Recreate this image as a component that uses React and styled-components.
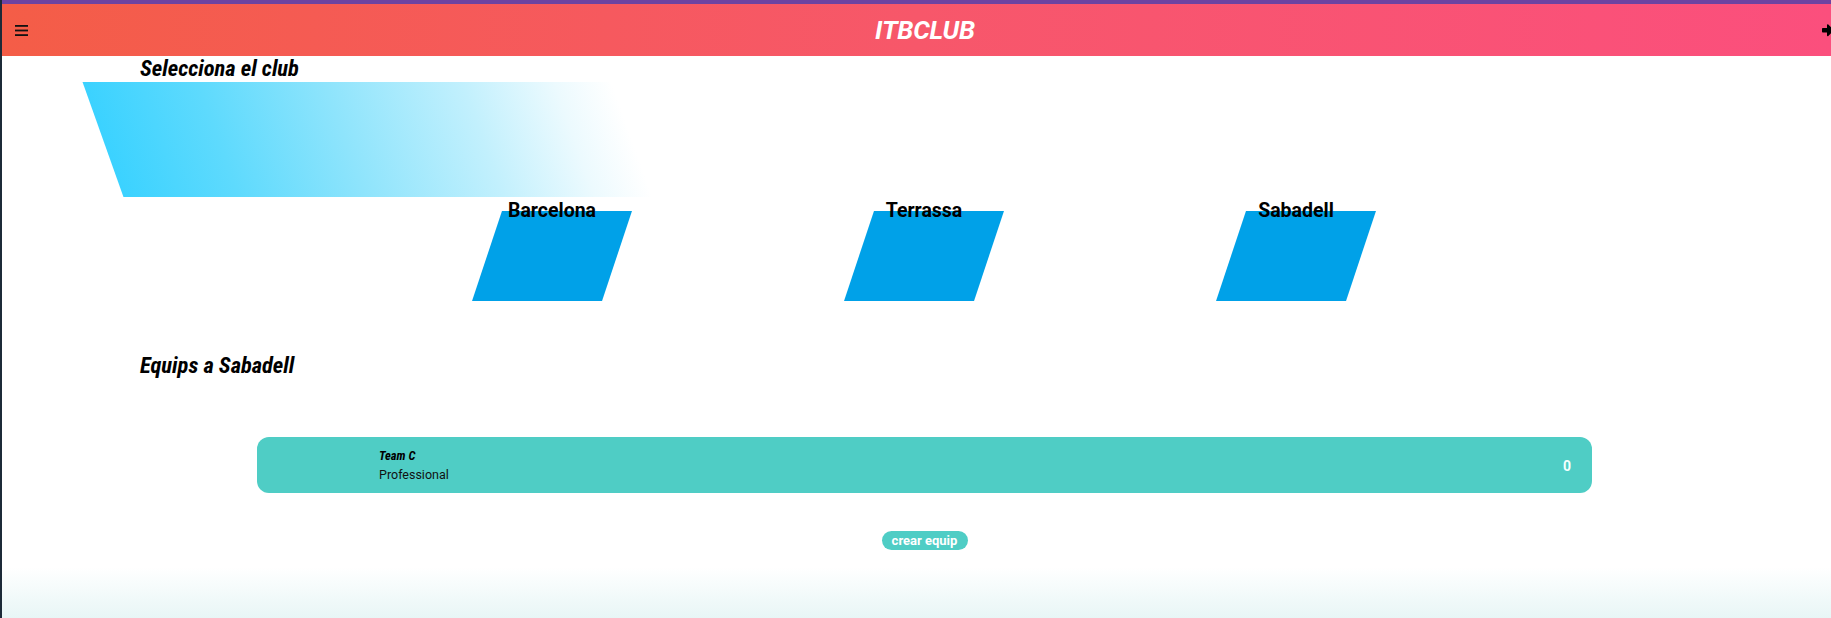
import React from "react";
import styled, { createGlobalStyle } from "styled-components";
import { FaSignInAlt } from "react-icons/fa";

const GlobalStyle = createGlobalStyle`
  html, body { margin: 0; padding: 0; }
  body {
    border-left: 2px solid #1c2a38;
    font-family: Roboto, "Liberation Sans", sans-serif;
    overflow: hidden;
  }
`;

const clubs = ["Barcelona", "Terrassa", "Sabadell"];
const teams = [{ name: "Team C", level: "Professional", points: 0 }];

const Page = styled.div`
  display: flex;
  flex-direction: column;
  min-height: 100vh;
`;

const TopStrip = styled.div`
  height: 4px;
  background: #6d43a1;
`;

const Header = styled.header`
  height: 52px;
  display: flex;
  align-items: center;
  justify-content: space-between;
  padding-left: 13px;
  background: linear-gradient(to right, #f45d47, #f7576a 50%, #fb4f7d);
`;

const Burger = styled.svg`
  width: 13px;
  height: 11px;
  display: block;
`;

const Title = styled.h1`
  margin: 0;
  color: #fff;
  font-family: Roboto, sans-serif;
  font-style: italic;
  font-weight: 700;
  font-size: 26px;
  letter-spacing: -0.2px;
`;

const Logout = styled.div`
  width: 16px;
  margin-right: -7px;
  display: flex;
  color: #000;
`;

const Heading = styled.h2`
  margin: ${(p) => p.$top || 0}px 0 0 138px;
  font-family: "Roboto Condensed", "Liberation Sans Narrow", "DejaVu Sans Condensed", sans-serif;
  font-style: italic;
  font-weight: 700;
  font-size: 22.5px;
  line-height: 24px;
  color: #000;
`;

const Banner = styled.div`
  margin: 2px 0 0 101px;
  width: 575px;
  height: 115px;
  transform: skewX(19.6deg);
  background: linear-gradient(
    to right,
    #3bd2ff 0%,
    #5edafd 20%,
    #8ee4fc 42%,
    #c2f0fd 66%,
    #ecfafe 82%,
    #ffffff 92%
  );
`;

const ClubRow = styled.div`
  display: grid;
  grid-template-columns: repeat(3, 372px);
  padding-left: 364px;
`;

const Club = styled.div`
  display: flex;
  flex-direction: column;
  align-items: center;
`;

const ClubName = styled.span`
  position: relative;
  z-index: 1;
  margin-top: 2px;
  font-family: Roboto, sans-serif;
  font-weight: 700;
  font-size: 19.5px;
  line-height: 23px;
  color: #000;
`;

const ClubShape = styled.div`
  margin-top: -11px;
  width: 130px;
  height: 90px;
  background: #00a1e8;
  transform: skewX(-18.4deg);
`;

const TeamSection = styled.section`
  margin: 60px 0 0 255px;
  width: 1335px;
  display: flex;
  flex-direction: column;
  align-items: center;
`;

const TeamCard = styled.div`
  align-self: stretch;
  height: 56px;
  box-sizing: border-box;
  padding: 2px 21px 0 122px;
  border-radius: 12px;
  background: #4fcdc5;
  display: flex;
  align-items: center;
  justify-content: space-between;
`;

const TeamInfo = styled.div`
  display: flex;
  flex-direction: column;
  gap: 4px;
`;

const TeamName = styled.span`
  font-family: "Roboto Condensed", "Liberation Sans Narrow", "DejaVu Sans Condensed", sans-serif;
  font-style: italic;
  font-weight: 700;
  font-size: 12.5px;
  line-height: 14px;
  color: #000;
`;

const TeamLevel = styled.span`
  font-size: 12.5px;
  line-height: 16px;
  color: #111;
`;

const Points = styled.span`
  font-weight: 700;
  font-size: 14px;
  color: #f4fffe;
`;

const CreateButton = styled.button`
  margin-top: 38px;
  width: 86px;
  height: 19px;
  padding: 0;
  border: none;
  border-radius: 10px;
  background: #4fcdc5;
  color: #fff;
  font-family: Roboto, sans-serif;
  font-weight: 700;
  font-size: 13px;
  cursor: pointer;
`;

const Footer = styled.footer`
  flex: 1;
  margin-top: 17px;
  min-height: 50px;
  background: linear-gradient(to bottom, #ffffff, #e8f6f6);
`;

export default function App() {
  return (
    <Page>
      <GlobalStyle />
      <TopStrip />
      <Header>
        <Burger viewBox="0 0 13 11">
          <rect x="0" y="0" width="13" height="1.8" fill="#111" />
          <rect x="0" y="4.6" width="13" height="1.8" fill="#111" />
          <rect x="0" y="9.2" width="13" height="1.8" fill="#111" />
        </Burger>
        <Title>ITBCLUB</Title>
        <Logout>
          <FaSignInAlt size={16} />
        </Logout>
      </Header>

      <Heading>Selecciona el club</Heading>
      <Banner />
      <ClubRow>
        {clubs.map((c) => (
          <Club key={c}>
            <ClubName>{c}</ClubName>
            <ClubShape />
          </Club>
        ))}
      </ClubRow>

      <Heading $top={52}>Equips a Sabadell</Heading>
      <TeamSection>
        {teams.map((t) => (
          <TeamCard key={t.name}>
            <TeamInfo>
              <TeamName>{t.name}</TeamName>
              <TeamLevel>{t.level}</TeamLevel>
            </TeamInfo>
            <Points>{t.points}</Points>
          </TeamCard>
        ))}
        <CreateButton>crear equip</CreateButton>
      </TeamSection>
      <Footer />
    </Page>
  );
}
